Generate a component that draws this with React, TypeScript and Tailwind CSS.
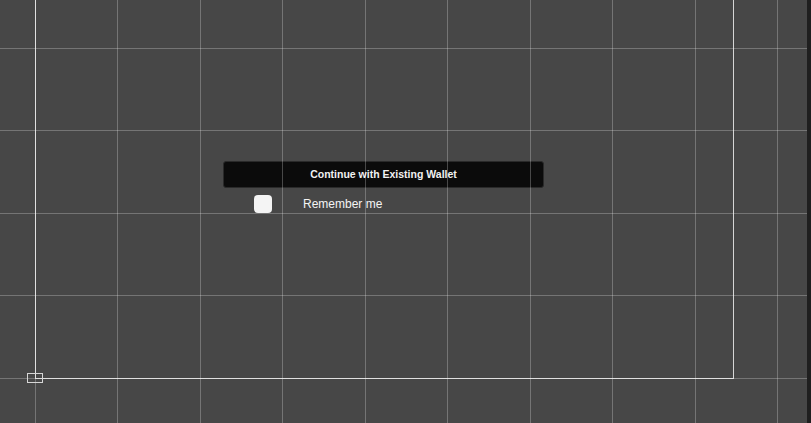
const STEP = 82.44;
const vLines = Array.from({ length: 10 }, (_, i) => 35 + i * STEP);
const hLines = Array.from({ length: 5 }, (_, i) => 48 + i * STEP);

export default function App() {
  return (
    <div className="relative h-[423px] w-full overflow-hidden bg-[#474747] font-['Liberation_Sans',Arial,sans-serif]">
      {/* Artboard frame on the canvas */}
      <div className="absolute left-[35px] top-0 h-[379px] w-[699px] border-x border-b border-[#d6d6d6]">
        <div className="flex flex-col items-center pr-[2px] pt-[161px]">
          <button className="flex h-[27px] w-[321px] items-center justify-center rounded-[3px] border border-[#2a2a2a] bg-[#0b0b0b] text-[10.5px] font-bold text-[#f2f2f2]">
            Continue with Existing Wallet
          </button>
          <div className="mt-[7px] flex w-[321px] items-center gap-[31px] pl-[31px]">
            <div className="h-[18px] w-[18px] rounded-[4px] bg-[#f4f4f4]" />
            <span className="text-[12px] text-[#f4f4f4]">Remember me</span>
          </div>
        </div>
      </div>

      {/* Grid overlay */}
      <div className="pointer-events-none absolute inset-0">
        {vLines.map((x) => (
          <div
            key={`v${x}`}
            className="absolute top-0 h-full w-px bg-white/25"
            style={{ left: x }}
          />
        ))}
        {hLines.map((y) => (
          <div
            key={`h${y}`}
            className="absolute left-0 h-px w-full bg-white/25"
            style={{ top: y }}
          />
        ))}
      </div>

      {/* Frame handle */}
      <div className="absolute left-[27px] top-[373px] h-[10px] w-[16px] border border-[#d6d6d6]" />

      {/* Scrollbar strip */}
      <div className="absolute right-0 top-0 h-full w-[4px] bg-[#1f1f1f]" />
    </div>
  );
}
